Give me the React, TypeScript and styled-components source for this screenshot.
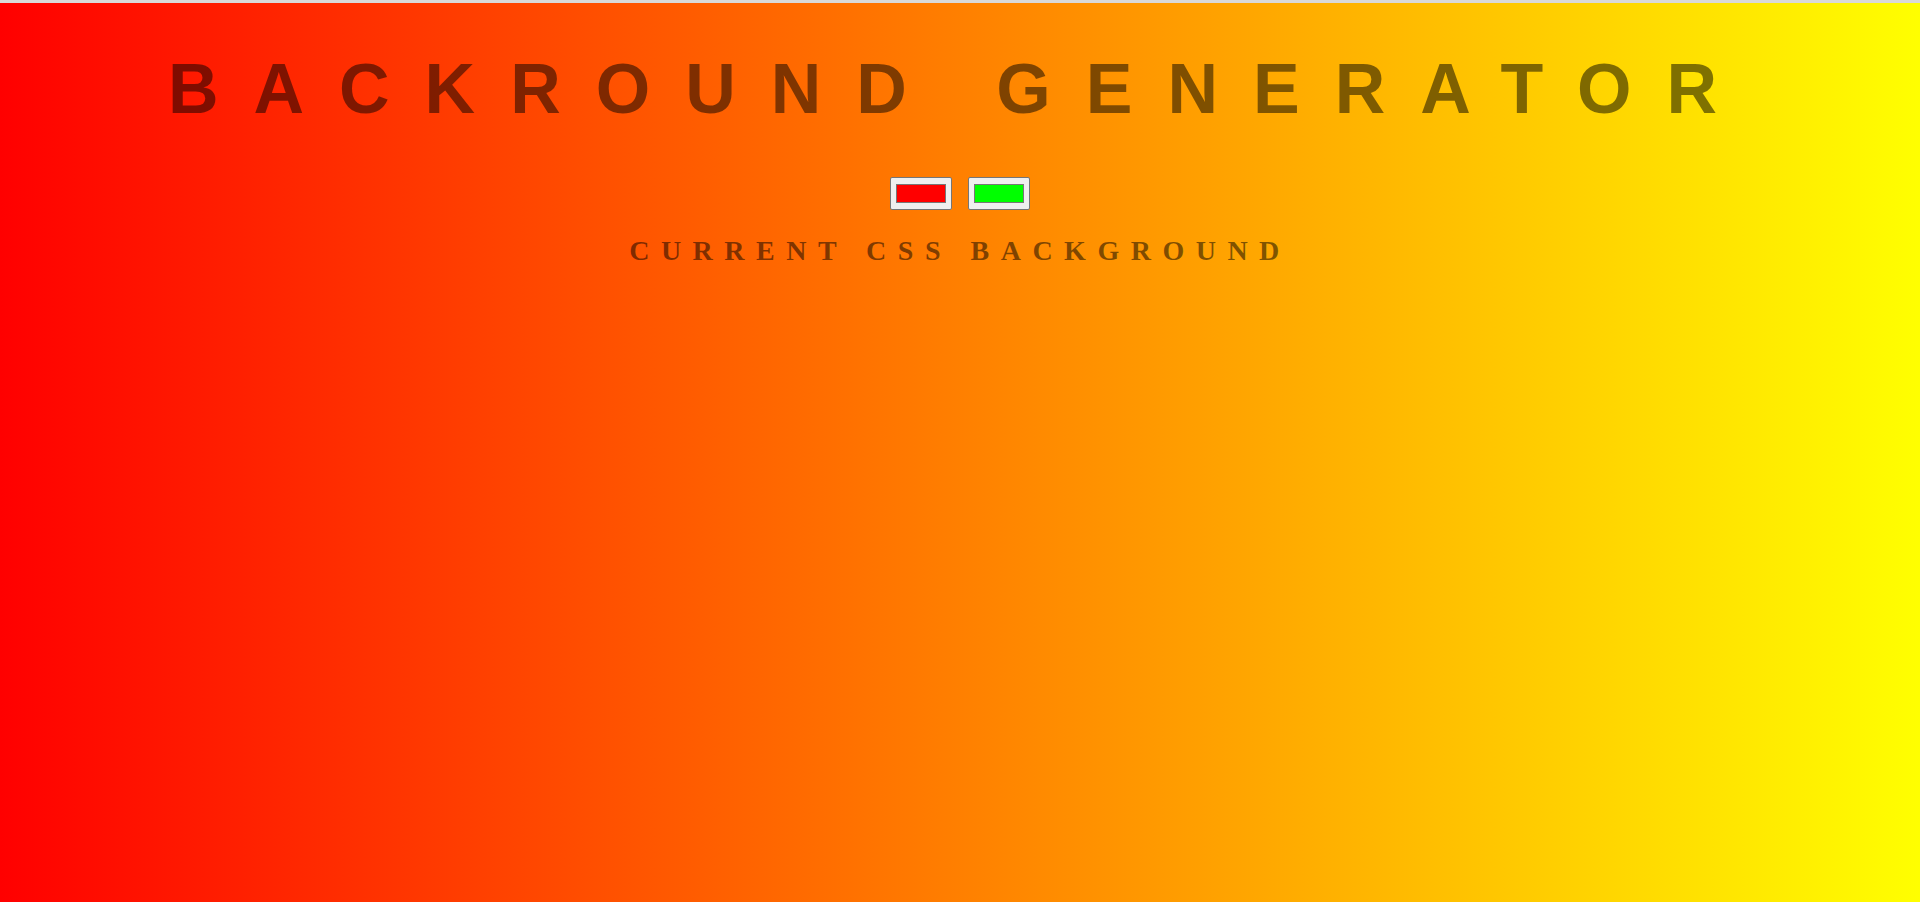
import React, { useState } from "react";
import styled, { createGlobalStyle } from "styled-components";

const GlobalStyle = createGlobalStyle`
  html, body {
    margin: 0;
    padding: 0;
    height: 100%;
  }
  body {
    background: #d9d9d9;
  }
  #root {
    min-height: 100%;
  }
`;

const Page = styled.main<{ $from: string; $to: string }>`
  box-sizing: border-box;
  margin-top: 3px;
  min-height: calc(100vh - 3px);
  background: linear-gradient(to right, ${(p) => p.$from}, ${(p) => p.$to});
  display: flex;
  flex-direction: column;
  align-items: center;
  padding-top: 46px;
  text-align: center;
`;

const Title = styled.h1`
  margin: 0;
  width: 100%;
  font-family: "Liberation Sans", Arial, sans-serif;
  font-weight: 700;
  font-size: 70px;
  line-height: 80px;
  letter-spacing: 0.5em;
  color: rgba(0, 0, 0, 0.5);
`;

const Pickers = styled.div`
  display: flex;
  gap: 16px;
  justify-content: center;
  margin-top: 48px;
`;

const ColorInput = styled.input`
  box-sizing: border-box;
  width: 62px;
  height: 33px;
  margin: 0;
  padding: 0;
  border: 1px solid #767676;
  border-radius: 2px;
  background: #efefef;
  cursor: pointer;

  &::-webkit-color-swatch-wrapper {
    padding: 6px 5px;
  }
  &::-webkit-color-swatch {
    border: 1px solid #777777;
    border-radius: 0;
  }
`;

const Subtitle = styled.h3`
  margin: 26px 0 0;
  font-family: "Liberation Serif", "Times New Roman", serif;
  font-weight: 700;
  font-size: 28px;
  line-height: 30px;
  letter-spacing: 11.5px;
  color: rgba(0, 0, 0, 0.5);
`;

export default function App() {
  const [c1, setC1] = useState("#ff0000");
  const [c2, setC2] = useState("#00ff00");
  return (
    <>
      <GlobalStyle />
      <Page $from="#ff0000" $to="#ffff00">
        <Title>BACKROUND GENERATOR</Title>
        <Pickers>
          <ColorInput type="color" value={c1} onChange={(e) => setC1(e.target.value)} />
          <ColorInput type="color" value={c2} onChange={(e) => setC2(e.target.value)} />
        </Pickers>
        <Subtitle>CURRENT CSS BACKGROUND</Subtitle>
      </Page>
    </>
  );
}
